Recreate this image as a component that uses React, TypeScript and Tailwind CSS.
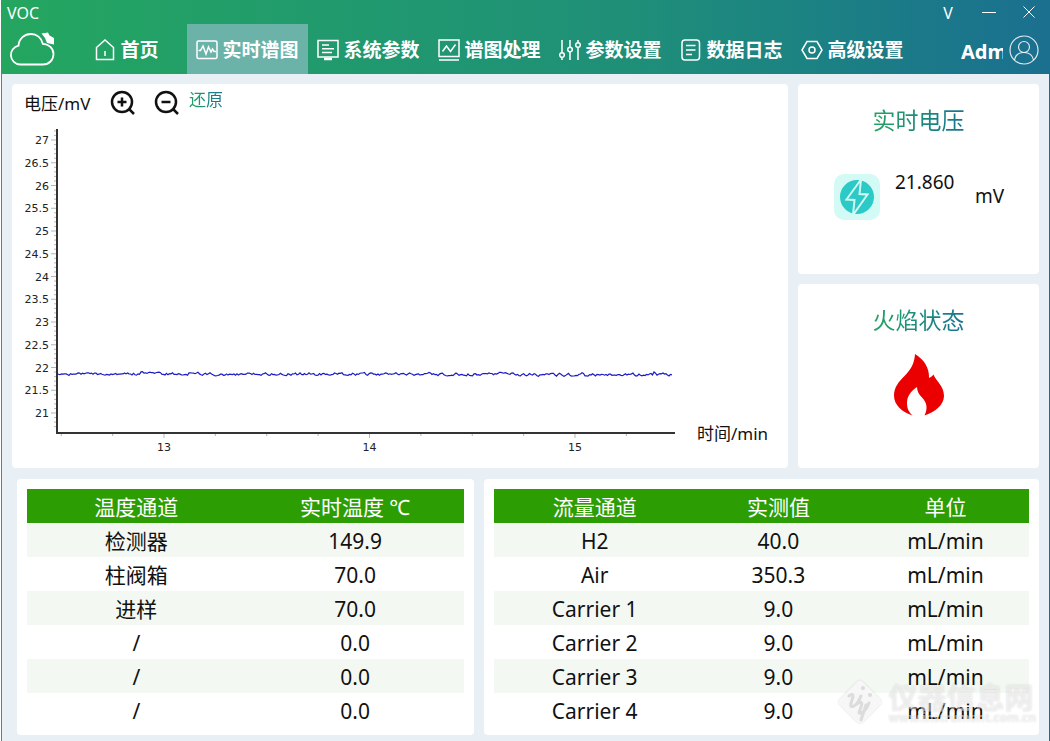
import { ReactNode } from "react";

type TNavItem = {
  label: string;
  icon: ReactNode;
};

const NAV_ITEMS: TNavItem[] = [
  {
    label: "首页",
    icon: (
      <>
        <path d="M2.5 8.500 11 1l8.500 7.500V20.500h-17z" />
        <path d="M11 12v5" />
      </>
    ),
  },
  {
    label: "实时谱图",
    icon: (
      <>
        <rect x="1" y="2" width="20" height="17.5" rx="1.5" />
        <path d="M2.5 11.5h2l2.5-4.5 3 8 2.5-7 2.5 5 1.5-3 1.5 2.5h2" />
      </>
    ),
  },
  {
    label: "系统参数",
    icon: (
      <>
        <rect x="1" y="1.500" width="20" height="16.5" />
        <path d="M5 6h7M5 9.750h12M5 13.500h10" />
        <path d="M7 20h8" strokeWidth="2.5" />
      </>
    ),
  },
  {
    label: "谱图处理",
    icon: (
      <>
        <rect x="1" y="1" width="20" height="16.500" />
        <path d="M1 21h20M4.500 12.500 8.500 7l4 5.500 5-7" />
      </>
    ),
  },
  {
    label: "参数设置",
    icon: (
      <>
        <path d="M3 1v12.500M3 18.500V21M11 1v7M11 13v8M19 1v2.500M19 8.500V21" />
        <circle cx="3" cy="16" r="2.300" />
        <circle cx="11" cy="10.500" r="2.300" />
        <circle cx="19" cy="6" r="2.300" />
      </>
    ),
  },
  {
    label: "数据日志",
    icon: (
      <>
        <rect x="2" y="1" width="17.500" height="20" rx="3" />
        <path d="M6 6.500h9.500M6 11h9.500M6 15.500h6" />
      </>
    ),
  },
  {
    label: "高级设置",
    icon: (
      <>
        <path d="M6 2.500h10l5 8.500-5 8.500H6L1 11z" />
        <circle cx="11" cy="11" r="3" />
      </>
    ),
  },
];

const TEMPERATURES = [
  ["检测器", "149.9"],
  ["柱阀箱", "70.0"],
  ["进样", "70.0"],
  ["/", "0.0"],
  ["/", "0.0"],
  ["/", "0.0"],
];

const FLOWS = [
  ["H2", "40.0", "mL/min"],
  ["Air", "350.3", "mL/min"],
  ["Carrier 1", "9.0", "mL/min"],
  ["Carrier 2", "9.0", "mL/min"],
  ["Carrier 3", "9.0", "mL/min"],
  ["Carrier 4", "9.0", "mL/min"],
];

// chart geometry, in viewBox units
const AXIS_X = 39;
const AXIS_Y = 309;
const toX = (min: number) => 146 + (min - 13) * 205.5;
const toY = (mv: number) => 289 - (mv - 21) * 45.5;

const Y_LABELS = Array.from({ length: 13 }, (_, i) => 21 + i * 0.5);
const Y_TICKS = Array.from({ length: 66 }, (_, i) => 20.7 + i * 0.1);
const X_TICKS = Array.from({ length: 12 }, (_, i) => 12.5 + i * 0.25);

function buildSignal() {
  const spikes: Record<number, number> = {
    56: 1.5,
    88: 2.2,
    155: -1.5,
    230: 1.4,
    295: 1.8,
    350: 1.6,
    398: 1.8,
  };
  let seed = 17;
  let drift = 0;
  const points: string[] = [];
  for (let i = 0; i <= 410; i++) {
    seed = (seed * 16645 + 12345) % 65536;
    drift = drift * 0.5 + (seed / 65536 - 0.5) * 2.6;
    const spike = spikes[i] ?? (spikes[i - 1] ?? 0) * 0.6;
    const x = AXIS_X + i * 1.5;
    const y = 249.6 + i * 0.003 + drift - spike;
    points.push(`${x.toFixed(1)},${y.toFixed(1)}`);
  }
  return points.join(" ");
}

const SIGNAL = buildSignal();

function Header() {
  return (
    <header className="text-white">
      <div className="flex h-6 items-center justify-between pl-[5px]">
        <span className="pt-0.5 text-base">VOC</span>
        <div className="flex">
          <button className="w-10 pt-0.5 text-base" aria-label="V">
            V
          </button>
          <button
            className="flex w-[41px] items-center justify-center"
            aria-label="最小化"
          >
            <svg width="14" height="12" stroke="currentColor">
              <path d="M0 6.500h14" />
            </svg>
          </button>
          <button
            className="flex w-10 items-center justify-center"
            aria-label="关闭"
          >
            <svg width="12" height="12" stroke="currentColor" fill="none">
              <path d="m.5.5 11 11M11.500.5l-11 11" />
            </svg>
          </button>
        </div>
      </div>
      <div className="flex h-[50px]">
        <div className="w-16 pt-2 pl-[7px]">
          <svg width="48" height="36" viewBox="0 0 48 36" fill="none">
            <path
              d="M11 32.500a9.500 9.500 0 0 1-1.500-18.800C10 6.500 15.500 2 22 2c5.800 0 10.500 3.800 11.800 9.800 6 .2 10.700 4.700 10.700 10.200 0 6-4.500 10.500-10.500 10.500z"
              stroke="currentColor"
              strokeWidth="1.800"
            />
            <path
              d="M32.500 1.500 39 .5l1.500 3 4.500 2.500v6.500l-7-1.500-2-5z"
              fill="currentColor"
            />
          </svg>
        </div>
        <nav className="flex">
          {NAV_ITEMS.map((item, i) => (
            <button
              key={item.label}
              className={
                i === 1
                  ? "flex w-[121px] items-center justify-center gap-1 bg-[#6bb3a8] pt-0.5 text-[19px] font-bold"
                  : "flex w-[121px] items-center justify-center gap-1 pt-0.5 text-[19px] font-bold"
              }
            >
              <svg
                width="22"
                height="22"
                viewBox="0 0 22 22"
                fill="none"
                stroke="currentColor"
                strokeWidth="1.500"
              >
                {item.icon}
              </svg>
              {item.label}
            </button>
          ))}
        </nav>
        <button className="ml-auto flex items-center gap-1.5 pt-0.5 pr-2.5">
          <span className="w-[42px] overflow-hidden pt-1 text-xl font-bold">
            Adm
          </span>
          <svg
            width="30"
            height="30"
            viewBox="0 0 30 30"
            fill="none"
            stroke="currentColor"
            strokeOpacity="0.85"
            strokeWidth="1.200"
          >
            <circle cx="15" cy="15" r="14" />
            <circle cx="15" cy="12" r="5.500" />
            <path d="M5.500 25c1-5 5-7.500 9.500-7.500s8.500 2.500 9.500 7.500" />
          </svg>
        </button>
      </div>
    </header>
  );
}

function SignalChart() {
  return (
    <svg
      className="min-w-0 flex-1"
      viewBox="0 0 660 332"
      fontFamily="DejaVu Sans, sans-serif"
      fontSize="11"
      fill="#222"
    >
      <g stroke="#b5b5b5">
        {Y_TICKS.map((v, i) => (
          <path key={i} d={`M${(i - 3) % 5 === 0 ? 33 : 36} ${toY(v)}H39`} />
        ))}
        {X_TICKS.map((v) => (
          <path key={v} d={`M${toX(v)} 309v${v % 1 === 0 ? 5 : 3}`} />
        ))}
      </g>
      {Y_LABELS.map((v) => (
        <text key={v} x="31" y={toY(v) + 4} textAnchor="end">
          {v}
        </text>
      ))}
      {[13, 14, 15].map((v) => (
        <text key={v} x={toX(v)} y="327" textAnchor="middle">
          {v}
        </text>
      ))}
      <path
        d={`M${AXIS_X} 5V${AXIS_Y}H657`}
        fill="none"
        stroke="#333"
        strokeWidth="2"
      />
      <polyline points={SIGNAL} fill="none" stroke="#1c1cc4" strokeWidth="1.2" />
    </svg>
  );
}

function ChartPanel() {
  return (
    <section className="flex-1 rounded bg-white pb-3 pl-1.5">
      <div className="flex h-10 items-center pl-1.5">
        <h2 className="w-[85px] text-[17px]">电压/mV</h2>
        <button className="mr-4" aria-label="放大">
          <svg
            width="28"
            height="28"
            viewBox="0 0 28 28"
            fill="none"
            stroke="#111"
            strokeWidth="2.500"
          >
            <circle cx="13" cy="12" r="10" />
            <path d="M13 7.500v9M8.500 12h9M20 19l5 5" />
          </svg>
        </button>
        <button className="mr-2" aria-label="缩小">
          <svg
            width="28"
            height="28"
            viewBox="0 0 28 28"
            fill="none"
            stroke="#111"
            strokeWidth="2.500"
          >
            <circle cx="13" cy="12" r="10" />
            <path d="M8.500 12h9M20 19l5 5" />
          </svg>
        </button>
        <button className="bg-linear-to-r from-[#24a35f] to-[#1b7290] bg-clip-text pb-2 text-[17px] text-transparent">
          还原
        </button>
      </div>
      <div className="flex items-end">
        <SignalChart />
        <span className="w-[110px] pb-2.5 pl-[19px] text-[17px]">时间/min</span>
      </div>
    </section>
  );
}

function StatusTitle({ children }: { children: ReactNode }) {
  return (
    <h2 className="bg-linear-to-r from-[#24a35f] to-[#1b7290] bg-clip-text text-[23px] leading-8 text-transparent">
      {children}
    </h2>
  );
}

function StatusPanels() {
  return (
    <aside className="flex w-[241px] flex-col gap-2.5">
      <section className="flex h-[190px] flex-col items-center rounded bg-white pt-5">
        <StatusTitle>实时电压</StatusTitle>
        <div className="mt-[38px] flex w-full pl-9">
          <svg width="46" height="46" viewBox="0 0 46 46">
            <rect width="46" height="46" rx="10" fill="#d3faf5" />
            <circle cx="23" cy="23" r="17" fill="#2bcac6" />
            <path
              d="m27 5.500-14.500 20 8 .5-1.500 15 14.500-20.500-8-.5z"
              fill="#2bcac6"
              stroke="#d3faf5"
              strokeWidth="2"
            />
          </svg>
          <span className="ml-[15px] w-20 text-[19px] leading-4">21.860</span>
          <span className="pt-2.5 text-[19px] leading-6">mV</span>
        </div>
      </section>
      <section className="flex flex-1 flex-col items-center rounded bg-white pt-5">
        <StatusTitle>火焰状态</StatusTitle>
        <svg
          className="mt-[18px]"
          width="50"
          height="62"
          viewBox="0 0 50 62"
          fill="#ea0000"
        >
          <path d="M21 0c9 5.500 14.500 14 14 24 2-.7 3.500-2 4.500-3.500C42 27 50 32 50 42c0 9-9 16-19.500 19.500 3.500-7 2.500-13-2.500-18-3-3-5-6-5-10.500-6 4-10 9-10 16 0 6 2 9 5.500 12.500C8 58 0 51 0 41.500 0 33 5 27.500 10.500 22 17 15.500 20.500 9 21 0z" />
        </svg>
      </section>
    </aside>
  );
}

type TDataTable = {
  columns: { title: string; width: string }[];
  rows: string[][];
};

function DataTable({ columns, rows }: TDataTable) {
  return (
    <section className="rounded bg-white px-2.5 pt-2.5 pb-2">
      <table className="w-full table-fixed text-center text-[21px] leading-8">
        <thead>
          <tr className="bg-[#2c9e04] text-white">
            {columns.map((column) => (
              <th
                key={column.title}
                className={`h-[34px] p-0 pt-0.5 font-normal ${column.width}`}
              >
                {column.title}
              </th>
            ))}
          </tr>
        </thead>
        <tbody>
          {rows.map((row, i) => (
            <tr key={i} className="odd:bg-[#f4f8f3]">
              {row.map((cell, j) => (
                <td key={j} className="h-[34px] p-0 pt-0.5">
                  {cell}
                </td>
              ))}
            </tr>
          ))}
        </tbody>
      </table>
    </section>
  );
}

function Watermark() {
  return (
    <div className="pointer-events-none absolute right-3.5 bottom-3.5 flex items-center gap-1 text-white/50">
      <svg
        className="drop-shadow-[0_0_1px_#ccc]"
        width="50"
        height="50"
        viewBox="0 0 50 50"
      >
        <rect
          x="9"
          y="9"
          width="32"
          height="32"
          rx="4"
          transform="rotate(45 25 25)"
          fill="#fff"
          fillOpacity="0.8"
        />
        <g fill="none" stroke="#dcdcdc" strokeWidth="3" strokeLinecap="round">
          <path d="M14 19c4-3 5-1 3 4s-2 8 2 6 5-6 7-10M22 27c4-3 6-2 4 3s-3 7 0 6 6-5 8-10M31 28l-5 15" />
        </g>
        <circle cx="28" cy="11" r="2" fill="#dcdcdc" />
        <circle cx="35" cy="18" r="2" fill="#dcdcdc" />
      </svg>
      <div className="text-shadow-[0_0_2px_#00000026]">
        <div className="text-[29px] leading-8 font-bold">仪器信息网</div>
        <div className="text-[12px] leading-2 font-bold">
          www.instrument.com.cn
        </div>
      </div>
    </div>
  );
}

export default function App() {
  return (
    <div className="bg-white pl-px font-['Noto_Sans','Noto_Sans_CJK_SC',sans-serif] text-[#111]">
      <div className="relative flex min-h-screen flex-col bg-linear-to-r from-[#24a65f] via-[#1f8f78] via-60% to-[#1b6f8f] px-px">
        <Header />
        <main className="flex flex-1 flex-col gap-[11px] bg-[#e8eff5] pt-2.5 pr-2.5 pb-1.5 pl-2.5">
          <div className="flex gap-2.5">
            <ChartPanel />
            <StatusPanels />
          </div>
          <div className="grid grid-cols-[457fr_554fr] gap-2.5 pl-[5px]">
            <DataTable
              columns={[
                { title: "温度通道", width: "w-1/2" },
                { title: "实时温度 ℃", width: "w-1/2" },
              ]}
              rows={TEMPERATURES}
            />
            <DataTable
              columns={[
                { title: "流量通道", width: "w-3/8" },
                { title: "实测值", width: "w-5/16" },
                { title: "单位", width: "w-5/16" },
              ]}
              rows={FLOWS}
            />
          </div>
        </main>
        <Watermark />
      </div>
    </div>
  );
}
